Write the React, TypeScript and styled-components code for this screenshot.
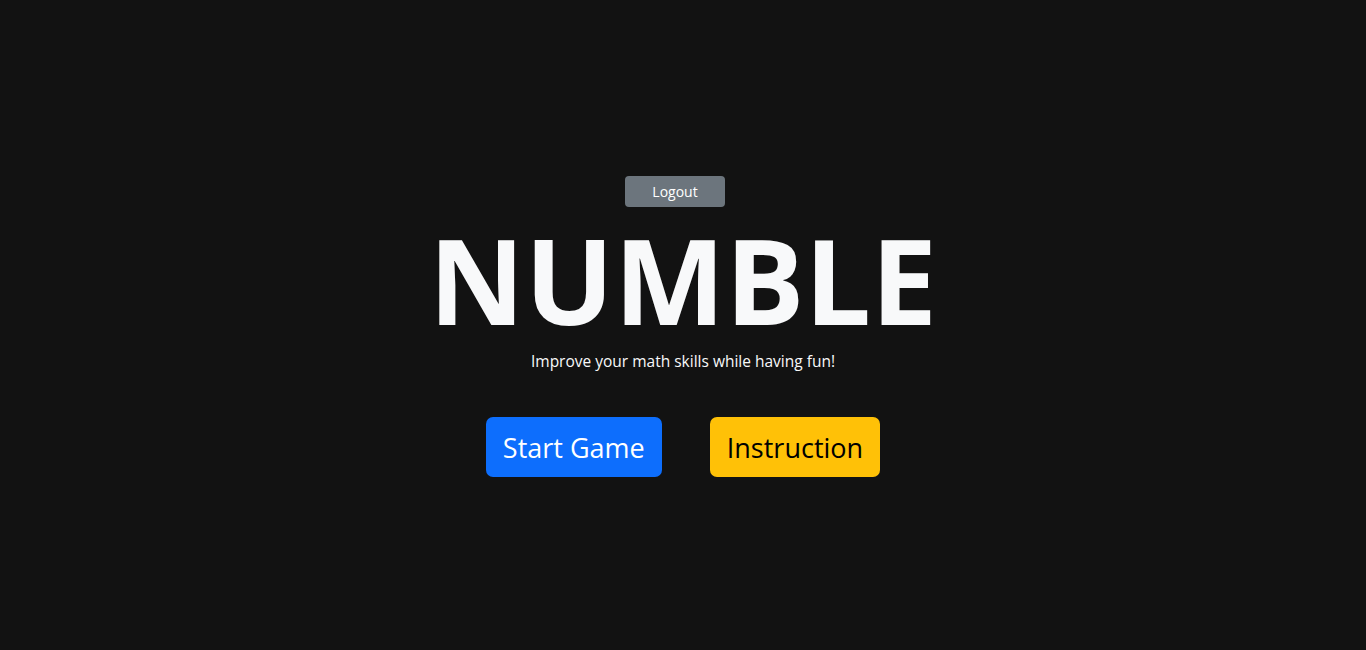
import styled, { createGlobalStyle } from 'styled-components';

const GlobalStyle = createGlobalStyle`
  html, body {
    margin: 0;
    padding: 0;
    background: #121212;
  }

  body {
    font-family: "Open Sans", "Noto Sans", sans-serif;
    color: #f8f9fa;
  }
`;

function App() {
  const handleLogout = () => {
    console.log('logout');
  };

  return (
    <>
      <GlobalStyle />
      <Home>
        <SmallButton onClick={handleLogout}>Logout</SmallButton>
        <Title>NUMBLE</Title>
        <Subtitle>Improve your math skills while having fun!</Subtitle>
        <Actions>
          <BigButton $variant="primary">Start Game</BigButton>
          <BigButton $variant="warning">Instruction</BigButton>
        </Actions>
      </Home>
    </>
  );
}

export default App;

const Home = styled.div`
  box-sizing: border-box;
  min-height: 650px;
  padding-top: 3px;
  display: flex;
  flex-direction: column;
  align-items: center;
  justify-content: center;
  text-align: center;
`;

const SmallButton = styled.button`
  width: 100px;
  height: 31px;
  margin-right: 16px;
  padding: 0;
  border: none;
  border-radius: 4px;
  background: #6c757d;
  color: #fff;
  font-family: inherit;
  font-size: 14px;
  cursor: pointer;
`;

const Title = styled.h1`
  margin: 4px 0 0;
  font-size: 118px;
  font-weight: 700;
  line-height: 138px;
  color: #f8f9fa;
`;

const Subtitle = styled.p`
  margin: 0;
  font-size: 15.5px;
  line-height: 24px;
  color: #f8f9fa;
`;

const Actions = styled.div`
  display: flex;
  gap: 48px;
  margin-top: 44px;
`;

const BigButton = styled.button<{ $variant: 'primary' | 'warning' }>`
  height: 60px;
  padding: 0 17px;
  border: none;
  border-radius: 7px;
  font-family: inherit;
  font-size: 27px;
  cursor: pointer;
  background: ${({ $variant }) => ($variant === 'primary' ? '#0d6efd' : '#ffc107')};
  color: ${({ $variant }) => ($variant === 'primary' ? '#fff' : '#000')};
`;
